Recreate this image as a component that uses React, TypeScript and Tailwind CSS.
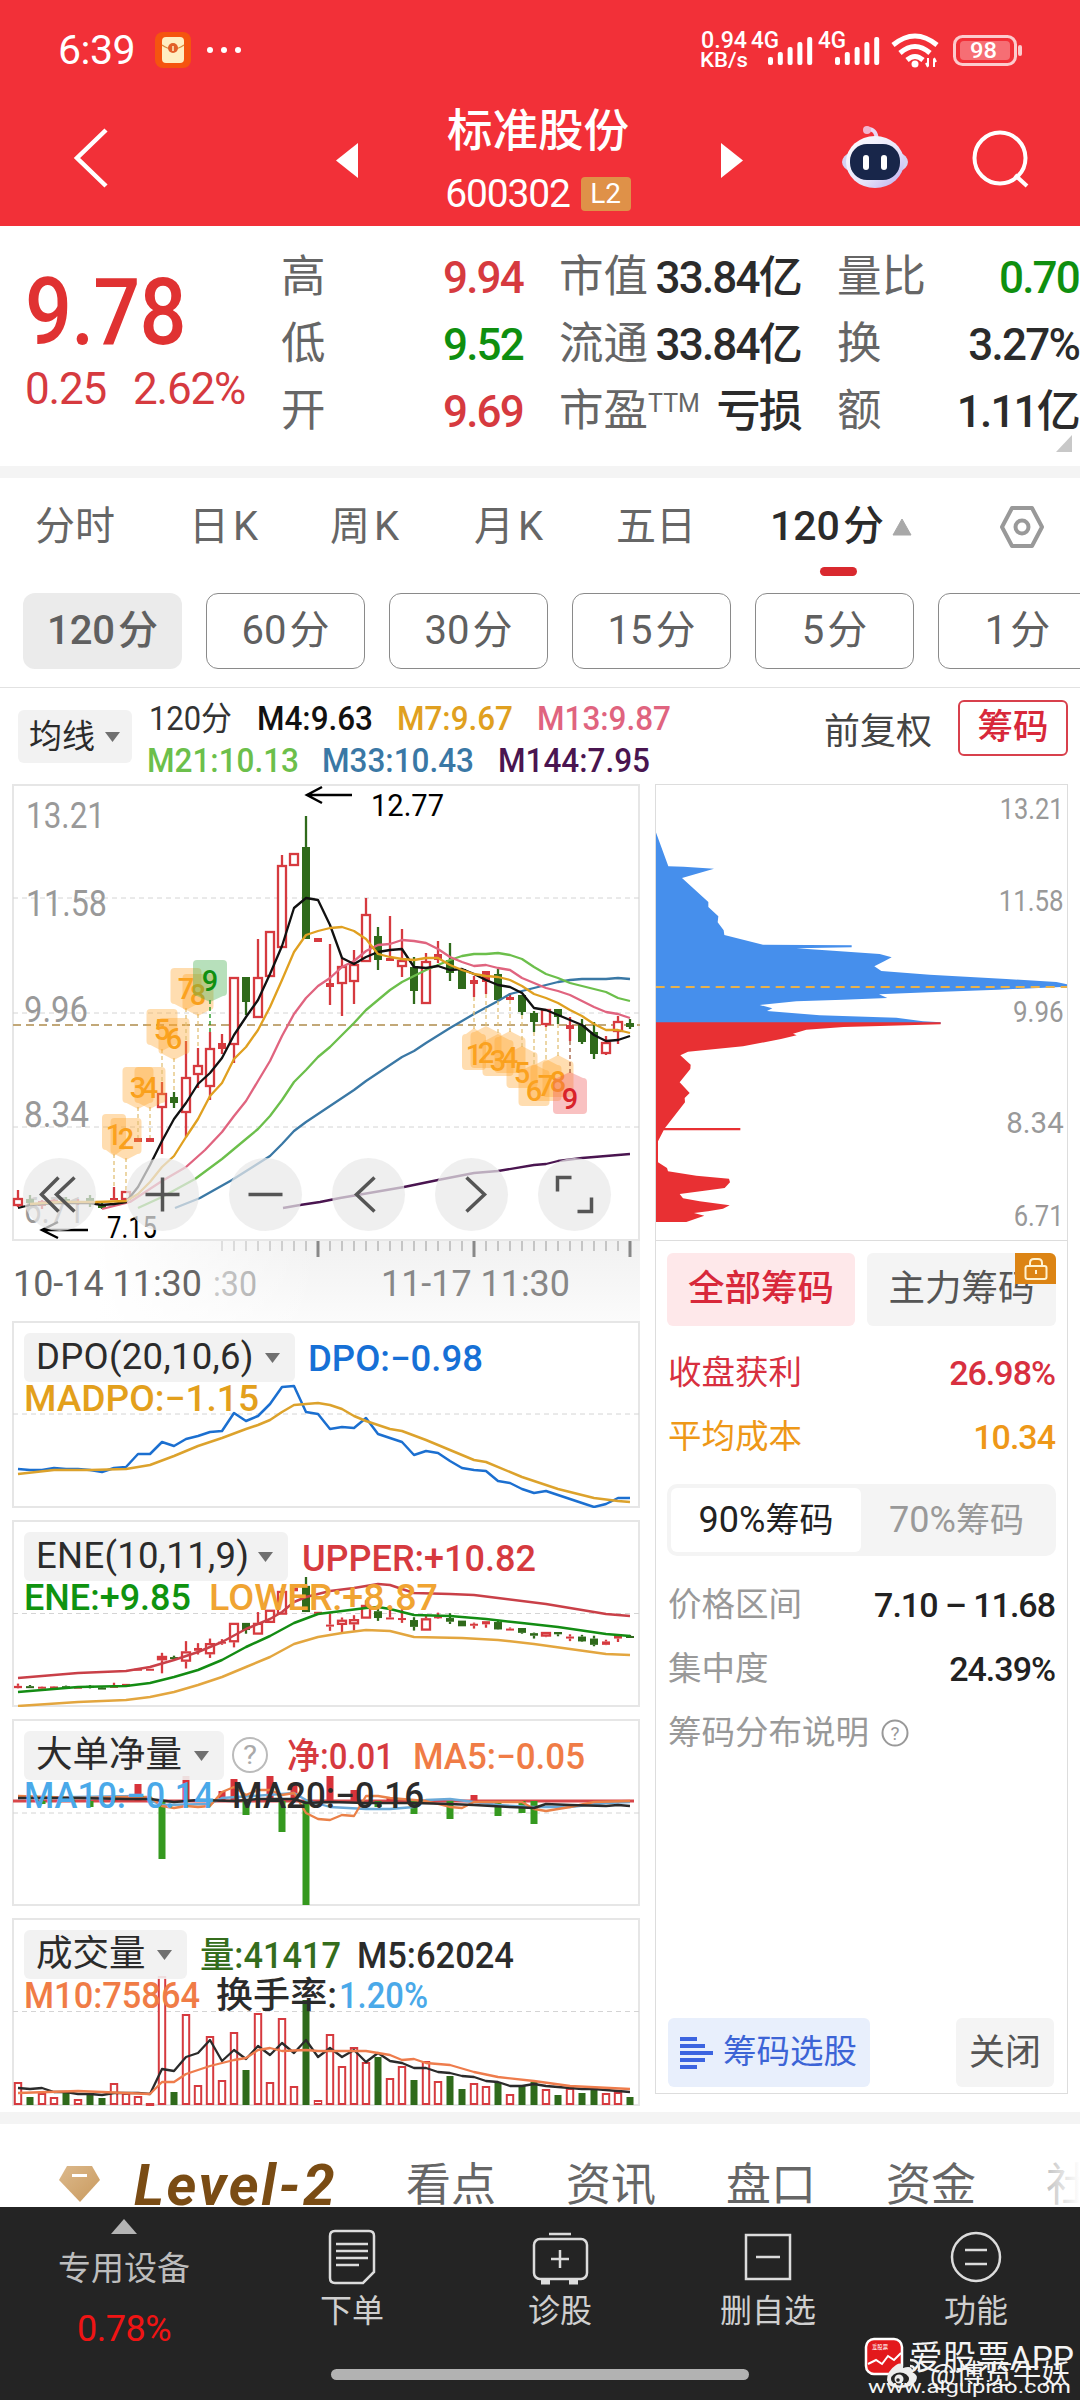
import type { ReactNode } from "react";
import clsx from "clsx";

const FONT = "Roboto, 'Noto Sans CJK SC', sans-serif";

const RED = "#d63a3f";
const GREEN = "#2f6a1b";

const MA_COLORS = {
  m4: "#111111",
  m7: "#e0a020",
  m13: "#e0647f",
  m21: "#6cbf4b",
  m33: "#3a78a5",
  m144: "#4a1550",
};

// high, body top, body bottom, low, kind: r = hollow up, R = filled up, g = down
type Candle = [number, number, number, number, "r" | "R" | "g"];

const CANDLES: Candle[] = [
  [1190, 1198, 1206, 1207, "r"],
  [1195, 1199, 1203, 1205, "g"],
  [1200, 1201, 1206, 1209, "R"],
  [1199, 1200, 1203, 1203, "R"],
  [1197, 1199, 1203, 1205, "g"],
  [1199, 1201, 1204, 1205, "R"],
  [1195, 1198, 1203, 1207, "g"],
  [1202, 1204, 1208, 1209, "g"],
  [1187, 1198, 1200, 1200, "R"],
  [1191, 1191, 1200, 1200, "r"],
  [1138, 1138, 1142, 1142, "R"],
  [1138, 1138, 1142, 1142, "R"],
  [1082, 1093, 1108, 1154, "r"],
  [1092, 1097, 1103, 1108, "g"],
  [1041, 1077, 1113, 1137, "r"],
  [1048, 1065, 1075, 1088, "r"],
  [1032, 1048, 1087, 1100, "r"],
  [1034, 1043, 1049, 1054, "R"],
  [977, 977, 1045, 1063, "r"],
  [977, 977, 1002, 1015, "g"],
  [939, 977, 1018, 1018, "r"],
  [931, 931, 977, 977, "r"],
  [855, 865, 948, 948, "r"],
  [853, 853, 866, 866, "r"],
  [816, 847, 939, 939, "g"],
  [938, 938, 942, 942, "R"],
  [944, 983, 987, 1005, "R"],
  [958, 966, 984, 1016, "r"],
  [950, 964, 982, 1004, "r"],
  [898, 914, 962, 962, "r"],
  [927, 936, 960, 970, "g"],
  [916, 958, 961, 961, "R"],
  [929, 960, 967, 977, "r"],
  [957, 967, 991, 1004, "g"],
  [953, 961, 1004, 1004, "r"],
  [941, 954, 960, 963, "R"],
  [943, 960, 973, 981, "g"],
  [969, 969, 989, 989, "g"],
  [976, 980, 984, 997, "R"],
  [971, 971, 982, 994, "R"],
  [969, 974, 1000, 1001, "g"],
  [993, 997, 1000, 1000, "R"],
  [995, 995, 1012, 1015, "g"],
  [1011, 1013, 1022, 1032, "g"],
  [1009, 1009, 1025, 1027, "r"],
  [1009, 1009, 1017, 1024, "g"],
  [1017, 1025, 1029, 1041, "R"],
  [1019, 1025, 1042, 1044, "g"],
  [1022, 1032, 1054, 1059, "g"],
  [1036, 1042, 1054, 1055, "r"],
  [1016, 1021, 1032, 1044, "r"],
  [1019, 1023, 1027, 1029, "g"],
];

const VOLUMES = [
  23, 8, 12, 8, 12, 6, 10, 7, 22, 12, 9, 2, 129, 13, 91, 20, 69, 25, 73, 35, 92, 23, 87, 19, 105, 5, 71,
  39, 58, 43, 48, 27, 39, 25, 44, 24, 29, 16, 22, 19, 22, 11, 19, 23, 16, 10, 17, 12, 15, 12, 13, 8,
];
const VOLUME_DOWN = [1, 4, 6, 7, 13, 19, 24, 30, 33, 36, 37, 40, 42, 43, 45, 47, 48, 51];

const VOLUME_M5 = [
  2088, 2089, 2088, 2092, 2092, 2094, 2094, 2095, 2093, 2093, 2093, 2094, 2069, 2071, 2057, 2053, 2040,
  2061, 2050, 2059, 2046, 2055, 2043, 2053, 2040, 2057, 2048, 2057, 2050, 2062, 2053, 2061, 2063, 2068,
  2068, 2072, 2073, 2076, 2077, 2081, 2082, 2086, 2086, 2084, 2086, 2087, 2088, 2089, 2089, 2090, 2091,
  2092,
];

const DPO = [
  1469, 1470, 1470, 1468, 1469, 1469, 1470, 1472, 1468, 1467, 1454, 1454, 1442, 1446, 1439, 1436, 1432,
  1431, 1413, 1421, 1416, 1404, 1387, 1386, 1412, 1414, 1429, 1427, 1428, 1418, 1434, 1438, 1442, 1455,
  1451, 1453, 1461, 1468, 1470, 1471, 1481, 1483, 1489, 1493, 1491, 1495, 1499, 1503, 1507, 1504, 1498,
  1498,
];

const NET_BARS: [number, number][] = [
  [2, 1804], [6, 1807], [8, 1797], [10, 1784], [12, 1859], [14, 1776], [17, 1791], [18, 1779], [19, 1815],
  [21, 1776], [22, 1832], [23, 1784], [24, 1905], [26, 1776], [28, 1790], [30, 1807], [31, 1797],
  [33, 1814], [36, 1819], [38, 1795], [40, 1816], [42, 1813], [43, 1824], [49, 1804],
];

const cx = (i: number) => 18 + i * 12;

const series = (ys: number[]) => ys.map((y, i) => `${cx(i)},${y}`).join(" ");

// "index,y" pairs, for lines that need fewer points than there are bars
const sparse = (s: string) =>
  s
    .split(" ")
    .map((p) => p.split(",").map(Number))
    .map(([i, y]) => `${cx(i)},${y}`)
    .join(" ");

function Line({ points, color, width = 2.3 }: { points: string; color: string; width?: number }) {
  return <polyline points={points} fill="none" stroke={color} strokeWidth={width} strokeLinejoin="round" />;
}

interface LabelProps {
  x: number;
  y: number;
  w?: number;
  size?: number;
  color: string;
  weight?: number;
  children: string;
}

function Label({ x, y, w, size = 36, color, weight = 400, children }: LabelProps) {
  return (
    <text
      x={x}
      y={y}
      fontSize={size}
      fontWeight={weight}
      fill={color}
      textLength={w}
      lengthAdjust="spacingAndGlyphs"
      fontFamily={FONT}
    >
      {children}
    </text>
  );
}

function Dash({ y }: { y: number }) {
  return <line x1={13} x2={640} y1={y} y2={y} stroke="#d4d4d4" strokeWidth={1} strokeDasharray="5 4" />;
}

function Candles({ map = (y) => y, body = 9 }: { map?: (y: number) => number; body?: number }) {
  return (
    <g>
      {CANDLES.map(([h, t, b, l, kind], i) => {
        const x = cx(i);
        const color = kind === "g" ? GREEN : RED;
        const top = map(t);
        const height = Math.max(map(b) - top, 2);
        const hollow = kind === "r" && height > 4;
        return (
          <g key={i} stroke={color} strokeWidth={2.3}>
            <line x1={x} x2={x} y1={map(h)} y2={top} />
            <line x1={x} x2={x} y1={top + height} y2={Math.max(map(l), top + height)} />
            {hollow ? (
              <rect x={x - body / 2 + 0.5} y={top + 1} width={body - 1} height={height - 2} fill="#fff" />
            ) : (
              <rect x={x - body / 2 + 0.5} y={top} width={body - 1} height={height} fill={color} stroke="none" />
            )}
          </g>
        );
      })}
    </g>
  );
}

function Marker({ n, i, base, down }: { n: number; i: number; base: number; down?: boolean }) {
  const x = cx(i);
  const half = n === 1 ? 12 : n === 9 ? 17 : 15.5;
  const top = base - 31;
  const last = n === 9;
  const bg = last ? (down ? "#f05a5a" : "#3fae49") : "#ffa62b";
  const fg = last ? (down ? "#d8232a" : "#119011") : "#f9a01b";
  return (
    <g>
      <line
        x1={x}
        x2={x}
        y1={down ? CANDLES[i][3] : top + 40}
        y2={down ? top - 5 : CANDLES[i][0]}
        stroke={last ? (down ? "#a05a3a" : "#119011") : "#e2c077"}
        strokeWidth={1.3}
        strokeDasharray="4 3"
      />
      <g fill={bg} opacity={0.37}>
        <rect x={x - half} y={top} width={half * 2} height={36} rx={4} />
        <path
          d={
            down
              ? `M${x - half + 4} ${top}L${x} ${top - 6}L${x + half - 4} ${top}Z`
              : `M${x - half + 4} ${top + 36}L${x} ${top + 42}L${x + half - 4} ${top + 36}Z`
          }
        />
      </g>
      <text x={x} y={base} fontSize={29} fontWeight={500} textAnchor="middle" fill={fg} fontFamily={FONT}>
        {n}
      </text>
    </g>
  );
}

function StatusBar() {
  return (
    <div className="flex h-[100px] items-center pl-[58px] text-white">
      <span className="w-[97px] text-[41px] leading-none tracking-[-0.5px]">6:39</span>
      <svg width="36" height="36" viewBox="0 0 36 36">
        <rect width="36" height="36" rx="8" fill="#f5540f" />
        <rect x="7" y="5" width="22" height="26" rx="4" fill="#ffeec2" />
        <path d="M7 13Q18 21 29 13" fill="none" stroke="#d98a3a" strokeWidth="1.5" />
        <circle cx="18" cy="16" r="5" fill="#e2602a" />
        <path d="M18 14v5" stroke="#ffeec2" strokeWidth="1.5" />
      </svg>
      <svg className="ml-4" width="34" height="6" viewBox="0 0 34 6" fill="#fff">
        <circle cx="3" cy="3" r="3" />
        <circle cx="17" cy="3" r="3" />
        <circle cx="31" cy="3" r="3" />
      </svg>
      <svg className="ml-[454px] shrink-0" width="380" height="44" viewBox="695 28 380 44">
        <Label x={701} y={48} w={46} size={24} color="#fff" weight={500}>
          0.94
        </Label>
        <Label x={700} y={67} w={48} size={21} color="#fff" weight={500}>
          KB/s
        </Label>
        <Label x={751} y={48} w={28} size={24} color="#fff" weight={500}>
          4G
        </Label>
        <Label x={818} y={48} w={28} size={24} color="#fff" weight={500}>
          4G
        </Label>
        <g fill="#fff">
          {[0, 67].map((dx) =>
            [8, 13, 18, 23, 28].map((h, k) => (
              <rect key={`${dx}-${k}`} x={768 + dx + k * 9.8} y={65 - h} width={5} height={h} rx={2} />
            )),
          )}
        </g>
        <g fill="none" stroke="#fff" strokeWidth={5}>
          <path d="M893 45Q915 27 937 45" />
          <path d="M900 53Q915 40 930 53" />
          <path d="M907 60Q915 53 923 60" />
        </g>
        <circle cx={915} cy={64} r={3.5} fill="#fff" />
        <path d="M928 58v8M926 63l2 4M934 67v-8M936 62l-2-4" stroke="#fff" strokeWidth={2} fill="none" />
        <rect x={954.5} y={36.5} width={61} height={28} rx={8} fill="none" stroke="#fff" strokeOpacity={0.75} strokeWidth={3} />
        <rect x={960} y={41} width={50} height={19} rx={4} fill="#fff" opacity={0.3} />
        <rect x={1018} y={45} width={4} height={11} rx={2} fill="#fff" opacity={0.75} />
        <Label x={970} y={58} w={27} size={22} color="#fff" weight={500}>
          98
        </Label>
      </svg>
    </div>
  );
}

function NavBar() {
  return (
    <div className="flex h-[126px] items-start text-white">
      <svg className="mt-7 ml-[70px]" width="42" height="60" viewBox="0 0 42 60">
        <path d="M36 2L7 30L36 58" fill="none" stroke="#fff" strokeWidth="4.5" />
      </svg>
      <svg className="mt-[43px] ml-[223px]" width="24" height="35" viewBox="0 0 24 35">
        <path d="M23 0V35L1 17.5Z" fill="#fff" />
      </svg>
      <div className="ml-[64px] flex w-[230px] flex-col items-center">
        <div className="mt-[2px] text-[45.5px] leading-[60px] font-medium">标准股份</div>
        <div className="mt-[12px] flex h-[40px] items-center gap-[11px]">
          <span className="text-[39px] leading-none tracking-[-1.2px]">600302</span>
          <span className="flex h-[34px] w-[50px] items-center justify-center rounded bg-[#df9148] text-[28px] leading-none">
            L2
          </span>
        </div>
      </div>
      <svg className="mt-[43px] ml-[67px]" width="24" height="35" viewBox="0 0 24 35">
        <path d="M1 0V35L23 17.5Z" fill="#fff" />
      </svg>
      <svg className="mt-6 ml-[96px]" width="70" height="66" viewBox="0 0 70 66">
        <defs>
          <linearGradient id="shell" x1="0" y1="0" x2="1" y2="1">
            <stop offset="0" stopColor="#fff" />
            <stop offset="0.6" stopColor="#e6e4fa" />
            <stop offset="1" stopColor="#b9a8ee" />
          </linearGradient>
        </defs>
        <path d="M27 5Q36 4 37 16" fill="none" stroke="#e8d8f4" strokeWidth="4" />
        <circle cx="27" cy="6" r="4" fill="#f0b6d0" />
        <ellipse cx="35" cy="38" rx="33" ry="15" fill="#d5d3f2" />
        <ellipse cx="35" cy="38" rx="29" ry="26" fill="url(#shell)" />
        <rect x="10" y="20" width="50" height="36" rx="17" fill="#18264a" />
        <rect x="23" y="31" width="6" height="15" rx="3" fill="#fff" />
        <rect x="41" y="31" width="6" height="15" rx="3" fill="#fff" />
      </svg>
      <svg className="mt-[30px] ml-[61px]" width="60" height="60" viewBox="0 0 60 60" fill="none" stroke="#fff" strokeWidth="4">
        <circle cx="29" cy="28" r="25.5" />
        <path d="M44 45L56 56" />
      </svg>
    </div>
  );
}

function Stat({ label, value, color = "text-[#2b2b2b]" }: { label: ReactNode; value: string; color?: string }) {
  return (
    <div className="flex h-[67px] w-[241px] items-center justify-between whitespace-nowrap">
      <span className="text-[44.5px] text-[#666]">{label}</span>
      <span className={clsx("mr-[-1px] text-[44px] font-medium tracking-[-1.8px]", color)}>{value}</span>
    </div>
  );
}

function Quote() {
  return (
    <div className="relative flex h-[240px] bg-white">
      <div className="w-[281px] shrink-0 pl-[25px] text-[#e03232]">
        <div className="mt-[35px] h-[104px] origin-left scale-x-[0.89] text-[93px] leading-[104px] font-medium tracking-[-1px]">
          9.78
        </div>
        <div className="flex gap-[27px] text-[44px] leading-[48px] tracking-[-1.2px] text-[#d63a3f]">
          <span>0.25</span>
          <span>2.62%</span>
        </div>
      </div>
      <div className="mt-[18px] flex gap-[37px]">
        <div>
          <Stat label="高" value="9.94" color="text-[#d63a3f]" />
          <Stat label="低" value="9.52" color="text-[#0f8f0f]" />
          <Stat label="开" value="9.69" color="text-[#d63a3f]" />
        </div>
        <div>
          <Stat label="市值" value="33.84亿" />
          <Stat label="流通" value="33.84亿" />
          <Stat
            label={
              <span className="flex">
                市盈<span className="mt-[13px] text-[25px] leading-none">TTM</span>
              </span>
            }
            value="亏损"
          />
        </div>
        <div>
          <Stat label="量比" value="0.70" color="text-[#0f8f0f]" />
          <Stat label="换" value="3.27%" />
          <Stat label="额" value="1.11亿" />
        </div>
      </div>
      <svg className="absolute right-[8px] bottom-[14px]" width="16" height="17" viewBox="0 0 16 17">
        <path d="M16 0V17H0Z" fill="#c8c8c8" />
      </svg>
    </div>
  );
}

function PeriodTabs() {
  return (
    <div className="flex h-[98px] items-center bg-white pl-[35px] text-[40px] whitespace-nowrap text-[#666]">
      <span className="w-[154px]">分时</span>
      <span className="w-[141px] tracking-[4px]">日K</span>
      <span className="w-[144px] tracking-[4px]">周K</span>
      <span className="w-[142px] tracking-[4px]">月K</span>
      <span className="w-[154px]">五日</span>
      <div className="relative flex h-full w-[229px] items-center font-medium text-[#2b2b2b]">
        <span className="flex gap-[3px] text-[41px]">
          <span>120</span>分
        </span>
        <svg className="ml-[8px]" width="20" height="18" viewBox="0 0 20 18">
          <path d="M10 1L19 17H1Z" fill="#a8a8a8" stroke="#a8a8a8" strokeLinejoin="round" />
        </svg>
        <span className="absolute bottom-0 left-[50px] h-[9px] w-[37px] rounded-full bg-[#d9292f]" />
      </div>
      <svg width="46" height="44" viewBox="0 0 46 44" fill="none" stroke="#999" strokeWidth="4">
        <path d="M13 3H33L43 22L33 41H13L3 22Z" strokeLinejoin="round" />
        <circle cx="23" cy="22" r="6.5" />
      </svg>
    </div>
  );
}

function MinutePills() {
  return (
    <div className="flex h-[112px] gap-[24px] overflow-hidden border-b border-[#e2e2e2] bg-white pt-[17px] pl-[23px]">
      {["120", "60", "30", "15", "5", "1"].map((minutes, i) => (
        <div
          key={minutes}
          className={clsx(
            "flex h-[76px] w-[159px] shrink-0 items-center justify-center gap-[3px] rounded-[12px] text-[40px] text-[#606060]",
            i === 0 ? "bg-[#ebebeb] font-medium" : "border border-[#8a8a8a]",
          )}
        >
          <span>{minutes}</span>分
        </div>
      ))}
    </div>
  );
}

function Caret() {
  return (
    <svg width="17" height="12" viewBox="0 0 17 12">
      <path d="M1 1H16L8.5 11Z" fill="#707070" />
    </svg>
  );
}

function MaRow() {
  return (
    <div className="flex h-[96px] bg-white pt-[9px]">
      <div className="mt-[13px] ml-[18px] flex h-[53px] w-[114px] shrink-0 items-center justify-center gap-[9px] rounded-md bg-[#f2f2f2] text-[33px] whitespace-nowrap text-[#2b2b2b]">
        均线
        <Caret />
      </div>
      <svg className="ml-3 shrink-0" width="536" height="84" viewBox="144 697 536 84">
        <Label x={149} y={730} w={83} size={33} color="#333">
          120分
        </Label>
        <Label x={257} y={730} w={116} size={34} color={MA_COLORS.m4} weight={500}>
          M4:9.63
        </Label>
        <Label x={397} y={730} w={116} size={34} color={MA_COLORS.m7} weight={500}>
          M7:9.67
        </Label>
        <Label x={537} y={730} w={134} size={34} color={MA_COLORS.m13} weight={500}>
          M13:9.87
        </Label>
        <Label x={147} y={772} w={152} size={34} color={MA_COLORS.m21} weight={500}>
          M21:10.13
        </Label>
        <Label x={322} y={772} w={152} size={34} color={MA_COLORS.m33} weight={500}>
          M33:10.43
        </Label>
        <Label x={498} y={772} w={152} size={34} color={MA_COLORS.m144} weight={500}>
          M144:7.95
        </Label>
      </svg>
      <span className="mt-[10px] ml-[144px] w-[134px] shrink-0 text-[36px] leading-[50px] text-[#444]">前复权</span>
      <span className="mt-[3px] flex h-[56px] w-[110px] shrink-0 items-center justify-center rounded-md border-2 border-[#d8404c] text-[35.5px] font-medium text-[#d8283a]">
        筹码
      </span>
    </div>
  );
}

const TOOL_ICONS = [
  "M-1 -17L-18 0L-1 17M15 -17L-3 0L15 17",
  "M-17 0H17M0 -17V17",
  "M-17 0H17",
  "M6 -17L-12 0L6 17",
  "M-5 -17L13 0L-5 17",
  "M-17 -3V-17H-3M17 3V17H3",
];

function MainChart() {
  return (
    <svg className="block" width="640" height="457" viewBox="0 784 640 457">
      <rect x={13} y={785} width={626} height={455} fill="#fff" stroke="#e6e6e6" strokeWidth={2} />
      <Dash y={898} />
      <Dash y={1013} />
      <Dash y={1127} />
      <line x1={13} x2={640} y1={1025} y2={1025} stroke="#c2a878" strokeWidth={2} strokeDasharray="8 5" />
      <Label x={26} y={828} w={79} size={37} color="#999">13.21</Label>
      <Label x={26} y={916} w={81} size={37} color="#999">11.58</Label>
      <Label x={24} y={1022} w={64} size={37} color="#999">9.96</Label>
      <Label x={24} y={1127} w={65} size={37} color="#999">8.34</Label>
      <Label x={24} y={1223} w={61} size={37} color="#999">6.71</Label>
      <Candles />
      <Line
        color={MA_COLORS.m144}
        points="283,1208 300,1205 320,1202 340,1198 404,1187 438,1180 474,1173 498,1171 534,1165 546,1164 558,1161 582,1158 606,1156 630,1154"
      />
      <Line
        color={MA_COLORS.m33}
        points="175,1208 200,1198 232,1180 270,1156 282,1144 294,1131 306,1122 330,1106 342,1098 354,1090 366,1081 390,1065 402,1057 414,1051 426,1043 450,1028 474,1014 498,1001 510,994 522,991 534,988 546,985 558,982 570,980 582,979 606,979 618,978 630,979"
      />
      <Line
        color={MA_COLORS.m21}
        points="138,1208 162,1197 195,1179 222,1159 246,1139 258,1129 270,1116 282,1100 294,1082 306,1070 318,1057 330,1047 342,1035 354,1023 366,1010 378,1000 390,990 402,982 414,976 426,970 438,965 450,960 462,956 474,954 486,954 498,953 510,955 522,959 534,967 546,974 558,978 570,983 582,986 594,989 606,992 618,998 630,1001"
      />
      <Line
        color={MA_COLORS.m13}
        points="102,1209 130,1202 162,1181 186,1167 205,1150 222,1132 234,1116 246,1101 258,1081 270,1061 282,1036 294,1014 306,998 318,986 330,978 342,967 354,961 366,951 378,945 390,944 402,940 414,941 426,943 438,949 450,957 462,962 474,966 486,965 498,968 510,970 522,978 534,983 546,988 558,991 570,995 582,1001 594,1007 606,1012 618,1014 630,1018"
      />
      <Line
        color={MA_COLORS.m4}
        points="18,1208 30,1205 54,1203 90,1203 102,1205 114,1204 126,1202 138,1187 150,1165 162,1141 174,1119 186,1103 198,1084 210,1073 222,1058 234,1035 246,1017 258,1000 270,974 282,946 294,908 306,898 318,900 330,925 342,958 354,964 366,957 378,952 390,950 402,949 414,967 426,968 438,966 450,970 462,969 474,974 486,980 498,985 510,987 522,993 534,1008 546,1010 558,1015 570,1020 582,1025 594,1035 606,1041 618,1040 630,1036"
      />
      <Line
        color={MA_COLORS.m7}
        points="30,1204 60,1202 96,1202 126,1201 138,1194 150,1182 162,1167 174,1156 186,1137 198,1119 210,1096 222,1083 234,1059 246,1047 258,1030 270,1007 282,980 294,952 306,935 318,931 330,928 342,927 354,931 366,939 378,954 390,957 402,959 414,960 426,958 438,958 450,965 462,970 474,974 486,976 498,977 510,980 522,986 534,994 546,998 558,1003 570,1010 582,1016 594,1024 606,1030 618,1030 630,1033"
      />

      {[1145, 1149, 1098, 1098, 1040, 1049, 999, 1005, 991].map((base, k) => (
        <Marker key={k} n={k + 1} i={8 + k} base={base} />
      ))}
      {[1065, 1063, 1071, 1068, 1083, 1101, 1096, 1092, 1109].map((base, k) => (
        <Marker key={k} n={k + 1} i={38 + k} base={base} down />
      ))}

      <g fill="none" stroke="#000" strokeWidth={2.5}>
        <path d="M352 795H307M322 787L307 795L322 803" />
        <path d="M88 1230H42M58 1222L42 1230L58 1238" />
      </g>
      <Label x={371} y={816} w={73} size={32} color="#000">12.77</Label>
      <Label x={107} y={1238} w={50} size={32} color="#000">7.15</Label>

      {TOOL_ICONS.map((d, k) => (
        <g key={k} transform={`translate(${59.5 + k * 103} 1194.5)`}>
          <circle r={36.5} fill="#e9e9e9" opacity={0.72} />
          <path d={d} fill="none" stroke="#555" strokeWidth={3.5} />
        </g>
      ))}
    </svg>
  );
}

function TimeAxis() {
  return (
    <svg className="block" width="640" height="80" viewBox="0 1241 640 80">
      <defs>
        <linearGradient id="axisX" x1="0" x2="1">
          <stop offset="0.15" stopColor="#fff" stopOpacity={1} />
          <stop offset="0.5" stopColor="#fff" stopOpacity={0} />
        </linearGradient>
        <linearGradient id="axisY" x1="0" y1="0" x2="0" y2="1">
          <stop offset="0" stopColor="#f1f1f1" />
          <stop offset="1" stopColor="#fbfbfb" />
        </linearGradient>
      </defs>
      <rect x={0} y={1241} width={640} height={80} fill="url(#axisY)" />
      {Array.from({ length: 35 }, (_, k) => {
        const x = 222 + k * 12;
        const major = x === 318 || x === 474 || x === 630;
        return (
          <line key={k} x1={x} x2={x} y1={1241} y2={major ? 1257 : 1251} stroke={major ? "#888" : "#999"} strokeWidth={major ? 3 : 1} />
        );
      })}
      <Label x={213} y={1296} w={44} size={35} color="#999">:30</Label>
      <rect x={0} y={1241} width={640} height={80} fill="url(#axisX)" />
      <Label x={13} y={1296} w={189} size={36} color="#666">10-14 11:30</Label>
      <Label x={381} y={1296} w={189} size={36} color="#888">11-17 11:30</Label>
    </svg>
  );
}

interface PanelProps {
  top: number;
  height: number;
  title: string;
  titleClass: string;
  dashY: number;
  children: ReactNode;
}

function Panel({ top, height, title, titleClass, dashY, children }: PanelProps) {
  return (
    <div className="relative">
      <svg className="block" width="640" height={height} viewBox={`0 ${top} 640 ${height}`}>
        <rect x={13} y={top + 1} width={626} height={height - 2} fill="#fff" stroke="#e6e6e6" strokeWidth={2} />
        <Dash y={dashY} />
        {children}
      </svg>
      <div
        className={clsx(
          "absolute top-[12px] left-[24px] flex h-[49px] items-center justify-between rounded-md bg-[#f1f1f1]/90 pr-[14px] pl-[12px] text-[36.5px] whitespace-nowrap text-[#2b2b2b]",
          titleClass,
        )}
      >
        {title}
        <Caret />
      </div>
    </div>
  );
}

function DpoPanel() {
  return (
    <Panel top={1321} height={187} title="DPO(20,10,6)" titleClass="w-[271px] tracking-[0.3px]" dashY={1414}>
      <Line color="#1b6fd0" points={series(DPO)} width={2.5} />
      <Line
        color="#dca22c"
        width={2.5}
        points={sparse(
          "0,1474 3,1470 6,1470 9,1469 11,1465 13,1456 15,1446 17,1438 19,1429 20,1425 21,1420 22,1412 23,1405 25,1403 26,1405 27,1409 28,1416 29,1421 31,1429 32,1431 34,1440 36,1450 38,1460 39,1462 42,1477 45,1489 48,1498 50,1501 51,1502",
        )}
      />
      <Label x={308} y={1371} w={175} color="#1670d6" weight={500}>DPO:−0.98</Label>
      <Label x={24} y={1411} w={235} color="#e3a01c" weight={500}>MADPO:−1.15</Label>
    </Panel>
  );
}

function EnePanel() {
  return (
    <Panel top={1520} height={187} title="ENE(10,11,9)" titleClass="w-[264px] tracking-[0.3px]" dashY={1613.5}>
      <Candles map={(y) => 1577 + (y - 816) * 0.285} />
      <Line
        color="#c94048"
        width={2.5}
        points={sparse(
          "0,1678 3,1675 5,1673 9,1671 11,1667 13,1660 15,1652 17,1642 19,1629 21,1619 22,1612 23,1602 24,1597 26,1591 28,1588 30,1584 31,1585 33,1593 36,1594 38,1595 40,1598 44,1604 47,1610 49,1614 51,1616",
        )}
      />
      <Line
        color="#138c13"
        width={2.5}
        points={sparse(
          "0,1692 5,1687 9,1686 11,1683 13,1677 15,1670 17,1660 19,1647 21,1636 23,1623 25,1614 27,1611 29,1608 30,1607 31,1609 33,1615 36,1616 39,1619 42,1623 45,1627 49,1634 51,1636",
        )}
      />
      <Line
        color="#e3a63f"
        width={2.5}
        points={sparse(
          "0,1706 5,1702 9,1700 11,1697 13,1692 15,1685 17,1677 19,1667 21,1657 23,1644 25,1637 27,1633 29,1630 31,1631 33,1637 37,1638 40,1640 43,1644 46,1649 49,1654 51,1655",
        )}
      />
      <Label x={302} y={1571} w={234} color={RED} weight={500}>UPPER:+10.82</Label>
      <Label x={24} y={1610} w={167} color="#0f930f" weight={500}>ENE:+9.85</Label>
      <Label x={209} y={1610} w={229} color="#f0a432" weight={500}>LOWER:+8.87</Label>
    </Panel>
  );
}

function NetPanel() {
  return (
    <Panel top={1719} height={187} title="大单净量" titleClass="w-[200px]" dashY={1813}>
      <line x1={13} x2={634} y1={1801} y2={1801} stroke="#d8474a" strokeWidth={3} />
      {NET_BARS.map(([i, y]) => (
        <rect
          key={i}
          x={cx(i) - 3.5}
          y={Math.min(y, 1801)}
          width={7}
          height={Math.abs(y - 1801)}
          fill={y > 1801 ? "#35991f" : "#d8333a"}
        />
      ))}
      <Line
        color="#6aa9d8"
        points={sparse(
          "0,1798 10,1796 12,1805 16,1804 17,1798 22,1794 23,1793 24,1800 26,1807 29,1809 31,1809 33,1807 34,1800 36,1799 38,1802 40,1805 43,1807 46,1807 49,1803 51,1802",
        )}
      />
      <Line
        color="#ea8148"
        points={sparse(
          "0,1796 5,1798 9,1797 11,1797 12,1806 13,1808 14,1806 15,1807 16,1806 17,1792 18,1787 19,1795 20,1790 21,1790 22,1795 23,1793 24,1813 25,1819 26,1820 27,1815 28,1816 29,1796 30,1796 31,1798 34,1801 36,1807 37,1808 38,1802 42,1802 43,1809 44,1811 46,1807 48,1802 51,1801",
        )}
      />
      <Line
        color="#2b2b2b"
        width={2.5}
        points={sparse(
          "0,1798 5,1798 9,1799 11,1799 13,1802 15,1800 18,1801 20,1799 23,1799 24,1803 26,1802 29,1803 33,1803 36,1804 38,1805 41,1807 43,1808 44,1804 46,1805 49,1806 50,1805 51,1806",
        )}
      />
      <circle cx={250} cy={1755} r={17} fill="none" stroke="#bbb" strokeWidth={2} />
      <Label x={243} y={1764} w={14} size={26} color="#aaa">?</Label>
      <Label x={287} y={1769} w={107} color={RED} weight={500}>净:0.01</Label>
      <Label x={413} y={1769} w={172} color="#f07c46" weight={500}>MA5:−0.05</Label>
      <Label x={24} y={1808} w={190} color="#4aa9e9" weight={500}>MA10:−0.14</Label>
      <Label x={232} y={1808} w={192} color="#2b2b2b" weight={500}>MA20:−0.16</Label>
    </Panel>
  );
}

function VolumePanel() {
  return (
    <Panel top={1918} height={188} title="成交量" titleClass="w-[163px]" dashY={2011.5}>
      {VOLUMES.map((h, i) =>
        VOLUME_DOWN.includes(i) ? (
          <rect key={i} x={cx(i) - 3.5} y={2105 - h} width={7} height={h} fill={GREEN} />
        ) : (
          <rect
            key={i}
            x={cx(i) - 3.2}
            y={2106 - h}
            width={6.4}
            height={Math.max(h - 2, 1)}
            fill="#fff"
            stroke={RED}
            strokeWidth={2}
          />
        ),
      )}
      <Line color="#2b2b2b" points={series(VOLUME_M5)} />
      <Line
        color="#ee7c4c"
        points={sparse(
          "0,2093 5,2091 11,2094 12,2082 13,2082 14,2074 16,2066 18,2060 19,2058 20,2050 21,2048 22,2051 24,2050 25,2051 29,2051 31,2055 32,2060 33,2059 34,2063 36,2065 38,2072 40,2077 43,2081 46,2086 51,2089",
        )}
      />
      <Label x={200} y={1968} w={141} color="#356d1c" weight={500}>量:41417</Label>
      <Label x={357} y={1968} w={157} color="#2b2b2b" weight={500}>M5:62024</Label>
      <Label x={24} y={2008} w={176} color="#f07c46" weight={500}>M10:75864</Label>
      <Label x={216} y={2008} w={121} color="#2b2b2b" weight={500}>换手率:</Label>
      <Label x={339} y={2008} w={89} color="#4aa9e9" weight={500}>1.20%</Label>
    </Panel>
  );
}

// The cost distribution is drawn on a grid three times finer than the page
function ChipChart() {
  const prices: [number, string, number][] = [
    [147, "13.21", 192],
    [423, "11.58", 195],
    [756, "9.96", 152],
    [1089, "8.34", 172],
    [1368, "6.71", 150],
  ];
  return (
    <svg className="block" width="411" height="455" viewBox="49 46 1233 1365">
      <path
        fill="#468fec"
        d="M48 186L86 290L132 291L223 297L127 325L206 397V412L236 440L234 458L252 482L254 496L370 525L636 527V533L470 536L580 543L720 553L756 563L735 574L704 590L725 604L870 615L1100 628L1250 637L1283 644V651L1075 660L868 668L718 674L743 685L610 690L470 695L360 706L398 716L382 724L540 737L770 744L850 755L903 758V762H48Z"
      />
      <path
        fill="#e83033"
        d="M48 758H903V764L748 768L612 772L500 780L460 792L471 797L424 808L310 830L145 846L122 857L153 885L152 898L120 938L150 970L135 985L136 998L76 1075H302V1082H72L55 1115V1178L82 1195L85 1205L170 1218L268 1227L271 1238L255 1255L205 1262L120 1273L130 1286L180 1295L270 1307L250 1317L205 1325L163 1330L194 1338L140 1357H48Z"
      />
      <line x1={48} x2={1283} y1={652} y2={652} stroke="#e8b14c" strokeWidth={6} strokeDasharray="27 18" />
      {prices.map(([y, text, w]) => (
        <Label key={text} x={1272 - w} y={y} w={w} size={87} color="#999">
          {text}
        </Label>
      ))}
    </svg>
  );
}

function Row({ label, value, color }: { label: ReactNode; value?: string; color?: string }) {
  return (
    <div className={clsx("flex h-[64px] items-center justify-between pr-[1px] pl-[1px] text-[33.5px]", color)}>
      <span className={clsx("flex items-center", !color && "text-[#999]")}>{label}</span>
      <span className={clsx("text-[34px] font-medium tracking-[-1px]", !color && "text-[#222]")}>{value}</span>
    </div>
  );
}

function ChipPanel() {
  return (
    <div className="ml-[15px] flex h-[1310px] w-[413px] flex-col border border-[#ddd] bg-white">
      <ChipChart />
      <div className="flex flex-1 flex-col border-t border-[#ddd] px-[11px] pt-[12px] pb-[6px]">
        <div className="flex gap-[12px] text-[36.5px]">
          <div className="flex h-[73px] w-[188px] items-center justify-center rounded-md bg-[#fee8ea] font-medium text-[#d8283a]">
            全部筹码
          </div>
          <div className="relative flex h-[73px] w-[189px] items-center justify-center rounded-md bg-[#f4f4f4] text-[#555]">
            主力筹码
            <span className="absolute top-0 right-0 flex h-[31px] w-[41px] items-center justify-center rounded-tr-md bg-[#dc8414]">
              <svg width="24" height="24" viewBox="0 0 24 24" fill="none" stroke="#fff2d0" strokeWidth="2">
                <rect x="1.5" y="9" width="21" height="13" rx="2" />
                <path d="M6 9V6Q6 2 10 2H14Q18 2 18 6V9M12 13V17" />
              </svg>
            </span>
          </div>
        </div>
        <div className="mt-[15px]">
          <Row label="收盘获利" value="26.98%" color="text-[#d8303f]" />
          <Row label="平均成本" value="10.34" color="text-[#ee9818]" />
        </div>
        <div className="mt-[15px] flex h-[72px] rounded-[10px] bg-[#f4f4f4] p-[4px] text-[34px]">
          <div className="flex w-[190px] items-center justify-center rounded-md bg-white text-[#222]">
            <span className="text-[36px]">90%</span>筹码
          </div>
          <div className="flex flex-1 items-center justify-center text-[#999]">
            <span className="text-[36px]">70%</span>筹码
          </div>
        </div>
        <div className="mt-[17px]">
          <Row label="价格区间" value="7.10 – 11.68" />
          <Row label="集中度" value="24.39%" />
          <Row
            label={
              <>
                筹码分布说明
                <svg className="ml-[12px]" width="28" height="28" viewBox="0 0 28 28">
                  <circle cx="14" cy="14" r="12.5" fill="none" stroke="#999" strokeWidth="2" />
                  <text x="14" y="21" fontSize="19" textAnchor="middle" fill="#999">
                    ?
                  </text>
                </svg>
              </>
            }
          />
        </div>
        <div className="mt-auto flex items-center justify-between text-[34px]">
          <div className="ml-[1px] flex h-[69px] w-[202px] items-center gap-[10px] rounded-md bg-[#e8effc] pl-[12px] whitespace-nowrap text-[#3c64d6]">
            <svg width="33" height="32" viewBox="0 0 33 32" fill="#3c64e0">
              <rect width="17" height="4" />
              <rect y="7" width="25" height="4" />
              <rect y="14" width="33" height="4" />
              <rect y="21" width="25" height="4" />
              <rect y="28" width="17" height="4" />
            </svg>
            <span className="text-[33.5px]">筹码选股</span>
          </div>
          <div className="mr-[2px] flex h-[69px] w-[98px] items-center justify-center rounded-md bg-[#f4f4f4] text-[36px] text-[#555]">
            关闭
          </div>
        </div>
      </div>
    </div>
  );
}

function InfoTabs() {
  return (
    <div className="relative flex h-[83px] overflow-hidden bg-white pt-[29px] text-[45px] leading-[66px] whitespace-nowrap text-[#666]">
      <svg className="mt-[12px] ml-[58px] shrink-0" width="43" height="38" viewBox="0 0 43 38">
        <defs>
          <linearGradient id="gem" x1="0" y1="0" x2="1" y2="1">
            <stop offset="0" stopColor="#dcb98c" />
            <stop offset="1" stopColor="#c99a5e" />
          </linearGradient>
        </defs>
        <path d="M9 1H34L42 15L22 37L1 15Z" fill="url(#gem)" />
        <path d="M14 10.5H29" stroke="#fff" strokeWidth="3" />
      </svg>
      <span className="ml-[33px] w-[272px] shrink-0 text-[57px] font-bold tracking-[2.6px] text-[#7a4c14] italic">
        Level-2
      </span>
      <span className="w-[160px] shrink-0">看点</span>
      <span className="w-[160px] shrink-0">资讯</span>
      <span className="w-[160px] shrink-0">盘口</span>
      <span className="w-[160px] shrink-0">资金</span>
      <span>社</span>
      <span className="absolute top-0 right-0 h-full w-[60px] bg-gradient-to-r from-white/30 to-white" />
    </div>
  );
}

function BottomItem({ label, children }: { label: string; children: ReactNode }) {
  return (
    <div className="flex w-[208px] flex-col items-center pt-[20px]">
      <svg width="60" height="60" viewBox="-30 -30 60 60" fill="none" stroke="#dcdcdc" strokeWidth="2.5">
        {children}
      </svg>
      <span className="text-[32px] leading-[48px]">{label}</span>
    </div>
  );
}

function BottomBar() {
  return (
    <div className="relative flex h-[193px] bg-[#242424] text-[#cfcfcf]">
      <div className="flex w-[248px] flex-col items-center pt-[12px]">
        <svg width="26" height="15" viewBox="0 0 26 15">
          <path d="M13 0L26 15H0Z" fill="#b4b4b4" />
        </svg>
        <span className="mt-[11px] text-[33px] leading-[48px] text-[#bdbdbd]">专用设备</span>
        <span className="mt-[12px] text-[36px] leading-[48px] tracking-[-0.5px] text-[#f01414]">0.78%</span>
      </div>
      <BottomItem label="下单">
        <path d="M-17 -26H17Q22 -26 22 -21V15L11 26H-17Q-22 26 -22 21V-21Q-22 -26 -17 -26Z" />
        <path d="M-16 -13H16M-16 -6H16M-16 1H16M-16 8H7" />
      </BottomItem>
      <BottomItem label="诊股">
        <rect x={-26} y={-18} width={53} height={40} rx={6} />
        <path d="M-11 -23H11M0 -7V11M-9 2H9" />
        <path d="M-19 25H-10M9 25H18" strokeWidth={5} />
      </BottomItem>
      <BottomItem label="删自选">
        <rect x={-22} y={-22} width={44} height={44} />
        <path d="M-12 0H12" />
      </BottomItem>
      <BottomItem label="功能">
        <circle r={24} />
        <path d="M-11 -7H11M-11 7H11" />
      </BottomItem>
      <span className="absolute top-[162px] left-[331px] h-[11px] w-[418px] rounded-full bg-[#b2b2b2]" />
      <svg className="absolute right-0 bottom-0" width="220" height="70" viewBox="860 2330 220 70">
        <rect x={866} y={2339} width={36} height={35} rx={8} fill="#e3191c" stroke="#fff" strokeWidth={2.5} />
        <Label x={872} y={2349} w={16} size={6} color="#fff">爱股票</Label>
        <path d="M868 2364L876 2360L882 2364L888 2356L894 2360L901 2353" fill="none" stroke="#fff" strokeWidth={2} />
        <Label x={909} y={2370} w={165} size={34} color="#f4f4f4">爱股票APP</Label>
        <path
          d="M887 2380Q887 2371 896 2365Q903 2361 903 2368Q913 2365 912 2372Q919 2375 916 2381Q911 2388 900 2388Q888 2388 887 2380Z"
          fill="#eee"
        />
        <ellipse cx={900} cy={2379} rx={9} ry={6.5} fill="#242424" />
        <circle cx={899} cy={2379} r={4.5} fill="#eee" />
        <circle cx={898} cy={2380} r={1.8} fill="#242424" />
        <path d="M910 2360Q920 2360 919 2371M910 2366Q915 2366 914 2371" fill="none" stroke="#eee" strokeWidth={2.5} />
        <Label x={930} y={2384} w={140} size={27} color="#f4f4f4">@博览牛妖</Label>
        <Label x={868} y={2393} w={203} size={19} color="#f4f4f4">www.aigupiao.com</Label>
      </svg>
    </div>
  );
}

export default function App() {
  return (
    <div className="h-[2400px] w-[1080px] overflow-hidden bg-white font-[Roboto,'Noto_Sans_CJK_SC',sans-serif]">
      <header className="bg-[#f23038]">
        <StatusBar />
        <NavBar />
      </header>
      <Quote />
      <div className="h-[12px] bg-[#f4f4f4]" />
      <PeriodTabs />
      <MinutePills />
      <MaRow />
      <div className="flex h-[1328px]">
        <div className="w-[640px]">
          <MainChart />
          <TimeAxis />
          <DpoPanel />
          <div className="h-[12px]" />
          <EnePanel />
          <div className="h-[12px]" />
          <NetPanel />
          <div className="h-[12px]" />
          <VolumePanel />
        </div>
        <ChipPanel />
      </div>
      <div className="h-[12px] bg-[#f4f4f4]" />
      <InfoTabs />
      <BottomBar />
    </div>
  );
}
